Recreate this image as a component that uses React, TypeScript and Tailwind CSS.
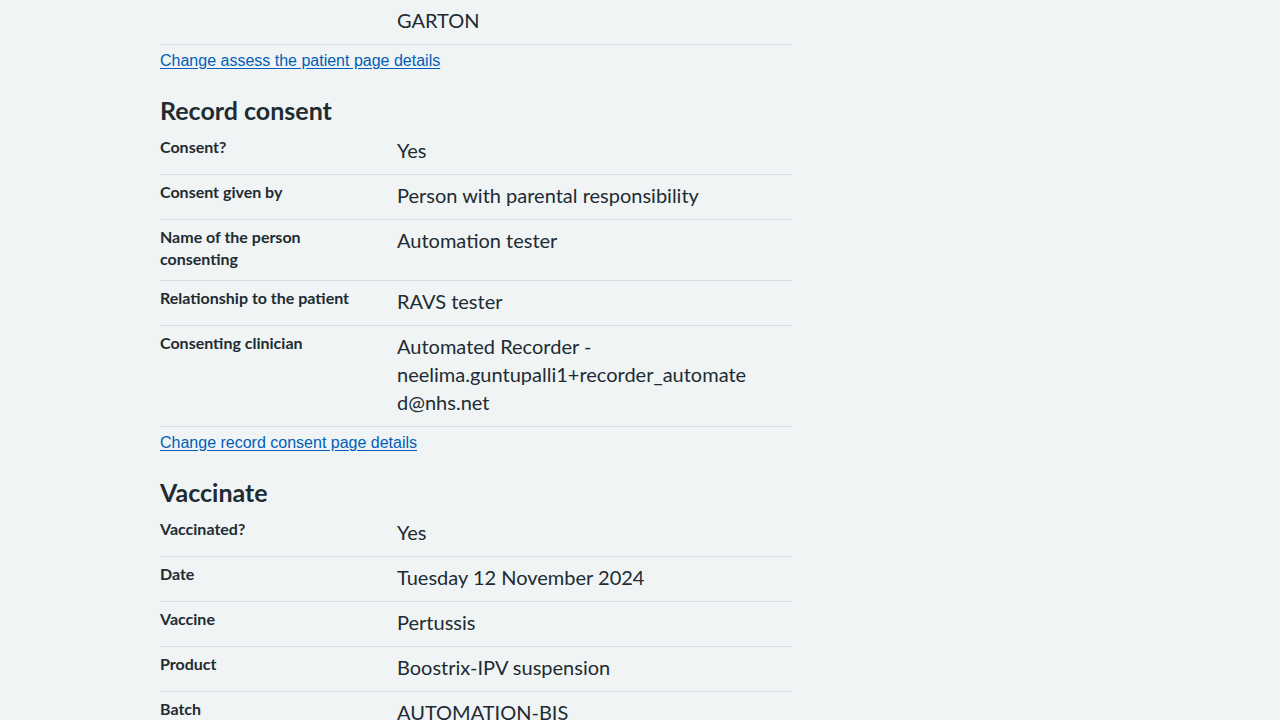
import React from "react";

type Row = { k: string; v: React.ReactNode };

const font = "font-['Lato','Noto_Sans',sans-serif]";

function SummaryRow({ k, v }: Row) {
  return (
    <div className="grid grid-cols-[237px_1fr] border-b border-[#d8dde0] pt-[6px] pb-[10px]">
      <div className="text-[16px] leading-[22px] font-bold text-[#212b32] pr-6">{k}</div>
      <div className="text-[20px] leading-[28px] text-[#212b32] pr-[24px]">{v}</div>
    </div>
  );
}

function ChangeLink({ children }: { children: React.ReactNode }) {
  return (
    <div className="mt-[3px]">
      <a
        href="#"
        className="font-['Liberation_Sans',Arial,sans-serif] text-[16px] leading-[24px] text-[#005eb8] underline underline-offset-[2px]"
      >
        {children}
      </a>
    </div>
  );
}

function Heading({ children }: { children: React.ReactNode }) {
  return (
    <h2 className="mt-[21px] mb-[4px] text-[25px] leading-[32px] font-bold text-[#212b32]">{children}</h2>
  );
}

export default function App() {
  return (
    <div className={`min-h-screen bg-[#f0f4f5] ${font}`}>
      <div className="ml-[160px] w-[632px]">
        <SummaryRow k="" v="GARTON" />
        <ChangeLink>Change assess the patient page details</ChangeLink>
        <Heading>Record consent</Heading>
        <SummaryRow k="Consent?" v="Yes" />
        <SummaryRow k="Consent given by" v="Person with parental responsibility" />
        <SummaryRow k="Name of the person consenting" v="Automation tester" />
        <SummaryRow k="Relationship to the patient" v="RAVS tester" />
        <SummaryRow
          k="Consenting clinician"
          v={
            <span>
              Automated Recorder -<br />
              neelima.guntupalli1+recorder_automate<br />
              d@nhs.net
            </span>
          }
        />
        <ChangeLink>Change record consent page details</ChangeLink>
        <Heading>Vaccinate</Heading>
        <SummaryRow k="Vaccinated?" v="Yes" />
        <SummaryRow k="Date" v="Tuesday 12 November 2024" />
        <SummaryRow k="Vaccine" v="Pertussis" />
        <SummaryRow k="Product" v="Boostrix-IPV suspension" />
        <SummaryRow k="Batch" v="AUTOMATION-BIS" />
        <SummaryRow k="Expiry date" v="31 December 2025" />
      </div>
    </div>
  );
}
